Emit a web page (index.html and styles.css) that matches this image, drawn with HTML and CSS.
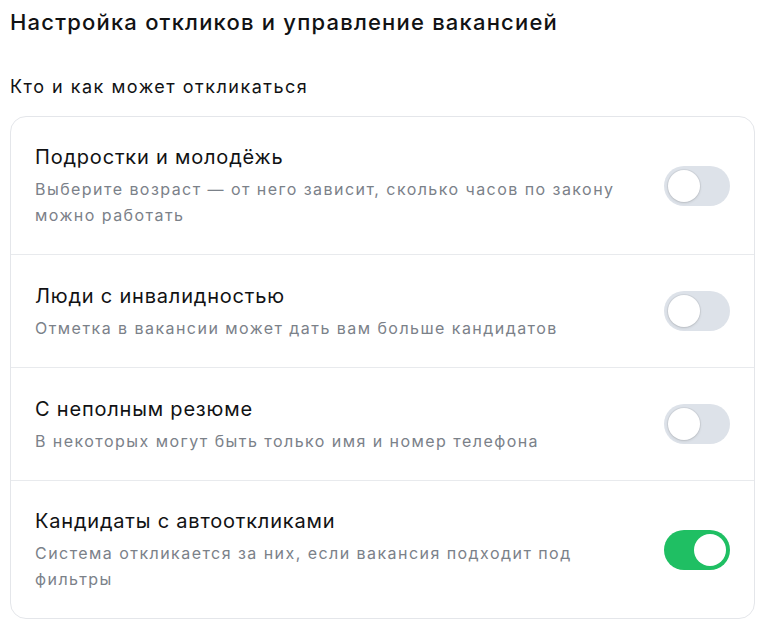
FILE: index.html
```html
<!DOCTYPE html>
<html lang="ru">
<head>
    <meta charset="UTF-8">
    <meta name="viewport" content="width=device-width, initial-scale=1.0">
    <title>Настройка откликов</title>
    <link rel="stylesheet" href="styles.css">
</head>
<body>

    <!-- Settings block -->
    <section class="settings">
        <h1 class="settings-title">Настройка откликов и управление вакансией</h1>
        <h2 class="settings-subtitle">Кто и как может откликаться</h2>

        <div class="card">
            <div class="row">
                <div class="row-text">
                    <div class="row-title">Подростки и молодёжь</div>
                    <div class="row-desc">Выберите возраст — от него зависит, сколько часов по закону можно работать</div>
                </div>
                <label class="toggle">
                    <input type="checkbox">
                    <span class="track"></span>
                </label>
            </div>

            <div class="row">
                <div class="row-text">
                    <div class="row-title">Люди с инвалидностью</div>
                    <div class="row-desc">Отметка в вакансии может дать вам больше кандидатов</div>
                </div>
                <label class="toggle">
                    <input type="checkbox">
                    <span class="track"></span>
                </label>
            </div>

            <div class="row">
                <div class="row-text">
                    <div class="row-title">С неполным резюме</div>
                    <div class="row-desc">В некоторых могут быть только имя и номер телефона</div>
                </div>
                <label class="toggle">
                    <input type="checkbox">
                    <span class="track"></span>
                </label>
            </div>

            <div class="row">
                <div class="row-text">
                    <div class="row-title">Кандидаты с автооткликами</div>
                    <div class="row-desc">Система откликается за них, если вакансия подходит под фильтры</div>
                </div>
                <label class="toggle">
                    <input type="checkbox" checked>
                    <span class="track"></span>
                </label>
            </div>
        </div>
    </section>

</body>
</html>
```

FILE: styles.css
```css
/* General Styles */
body, html {
    margin: 0;
    padding: 0;
    background: #ffffff;
    font-family: Inter, 'Noto Sans', sans-serif;
    color: #111214;
}

.settings {
    padding: 8px 17px 0 10px;
}

.settings-title {
    margin: 0;
    font-size: 22px;
    line-height: 28px;
    font-weight: 500;
    letter-spacing: 1.2px;
}

.settings-subtitle {
    margin: 39px 0 17px;
    font-size: 18px;
    line-height: 24px;
    font-weight: 400;
    letter-spacing: 1.5px;
}

.card {
    border: 1px solid #e4e6ea;
    border-radius: 16px;
}

.row {
    box-sizing: border-box;
    min-height: 113px;
    display: flex;
    align-items: center;
    gap: 40px;
    padding: 26px 24px;
    border-bottom: 1px solid #e8eaed;
}

.row:last-child {
    border-bottom: none;
}

.row-text {
    flex: 1;
}

.row-title {
    font-size: 20px;
    line-height: 28px;
    letter-spacing: 0.8px;
}

.row-desc {
    margin-top: 5px;
    font-size: 16px;
    line-height: 26px;
    letter-spacing: 1.45px;
    color: #7b8189;
}

/* Toggle switch */
.toggle {
    position: relative;
    flex: none;
    width: 66px;
    height: 40px;
    cursor: pointer;
}

.toggle input {
    display: none;
}

.track {
    display: block;
    width: 100%;
    height: 100%;
    border-radius: 20px;
    background: #dde2e9;
    transition: background 0.2s;
}

.track::after {
    content: "";
    position: absolute;
    top: 4px;
    left: 4px;
    width: 32px;
    height: 32px;
    border-radius: 50%;
    background: #fff;
    box-shadow: 0 0 0 1px rgba(0, 0, 0, 0.05), 0 1px 3px rgba(0, 0, 0, 0.12);
    transition: left 0.2s;
}

.toggle input:checked + .track {
    background: #1fbf63;
}

.toggle input:checked + .track::after {
    left: 30px;
    box-shadow: none;
}
```
